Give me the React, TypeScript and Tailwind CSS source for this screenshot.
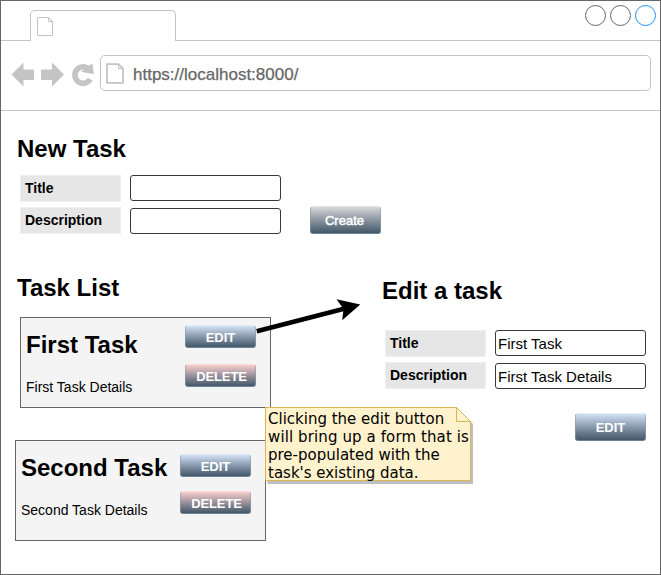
import type { ReactNode } from "react";

function Fields({ title = "", description = "" }: { title?: string; description?: string }) {
  return (
    <div className="flex gap-[9px]">
      <div className="flex flex-col gap-[5px]">
        {["Title", "Description"].map((label) => (
          <label
            key={label}
            className="flex h-[27px] w-[101px] items-center border border-[#f0f0f0] bg-[#e6e6e6] pb-[2px] pl-1 text-sm font-bold"
          >
            {label}
          </label>
        ))}
      </div>
      <div className="flex flex-col gap-[7px]">
        {[title, description].map((value, i) => (
          <div
            key={i}
            className="flex h-[26px] w-[151px] items-center rounded-[3px] border border-[#36393d] bg-white pt-[3px] pl-[2px] text-[15px] whitespace-nowrap"
          >
            {value}
          </div>
        ))}
      </div>
    </div>
  );
}

const tones = {
  gray: "from-[#d8d8d8] border-t-[#e4e4e4]",
  blue: "from-[#d4e1f5] border-t-[#dfe9f8]",
  red: "from-[#f8cecc] border-t-[#fadbd9]",
};

function Button({ tone, size, children }: { tone: keyof typeof tones; size: string; children: ReactNode }) {
  return (
    <button
      className={`flex w-[71px] items-center justify-center rounded-[3px] border border-x-[#8d9caa]/60 border-b-[#6b8496] bg-linear-to-b to-[#43586a] pt-px text-[13px] leading-none font-bold text-white ${tones[tone]} ${size}`}
    >
      {children}
    </button>
  );
}

function TaskCard({ name, box, buttons }: { name: string; box: string; buttons: string }) {
  return (
    <article className={`flex w-[251px] justify-between border border-[#666] bg-[#f4f4f4] pr-[14px] pl-[5px] ${box}`}>
      <div className="flex flex-col gap-[18px] pt-[13px]">
        <h3 className="text-2xl leading-[28px] font-bold whitespace-nowrap">{name}</h3>
        <p className="text-sm leading-5 whitespace-nowrap">{name} Details</p>
      </div>
      <div className={`flex flex-col ${buttons}`}>
        <Button tone="blue" size="h-[23px]">EDIT</Button>
        <Button tone="red" size="h-[23px]">
          <span className="pl-[2px] tracking-[-0.1px]">DELETE</span>
        </Button>
      </div>
    </article>
  );
}

export default function App() {
  return (
    <div className="relative flex h-[575px] w-[661px] flex-col overflow-hidden border border-[#666] bg-white font-['Liberation_Sans',Arial,sans-serif] text-black">
      <header className="-mx-px flex h-10 shrink-0 items-end">
        <div className="h-px w-[30px] bg-[#c4c4c4]" />
        <div className="h-[31px] w-[146px] rounded-t-[5px] border border-b-0 border-[#c4c4c4] pt-[6px] pl-[6px]">
          <svg className="h-5 w-[17px]" viewBox="0 0 17 20" fill="none" stroke="#c4c4c4">
            <path d="M.5 .5H11.5L15.5 4.5V18.5H.5Z" />
            <path d="M11.5 .5V4.5H15.5" />
          </svg>
        </div>
        <div className="flex h-10 flex-1 justify-end gap-1 border-b border-[#c4c4c4] pt-1 pr-[5px]">
          <span className="size-[21px] rounded-full border border-[#666]" />
          <span className="size-[21px] rounded-full border border-[#666]" />
          <span className="size-[21px] rounded-full border border-[#1e90ff]" />
        </div>
      </header>

      <nav className="-mx-px flex h-[70px] shrink-0 border-b border-[#c4c4c4] pt-[14px] pl-[10px]">
        <svg className="mt-[5px] h-[28px] w-[90px]" viewBox="10 60 90 28" fill="#c4c4c4">
          <path d="M11.5 74.5L23.5 62.5V69.5H34V80H23.5V86.5Z" />
          <path d="M64 74.5L52 62.5V69.5H41V80H52V86.5Z" />
          <path d="M90.2 79.2A8.2 8.2 0 1 1 88 68.5" fill="none" stroke="#c4c4c4" strokeWidth="5.6" />
          <path d="M92.3 63.3L93.8 74.3L81 71.7Z" />
        </svg>
        <div className="flex h-9 w-[551px] items-center rounded-[5px] border border-[#c4c4c4] pl-[5px] text-[17px] text-[#666]">
          <svg className="mr-[9px] h-[21px] w-[18px]" viewBox="0 0 18 21" fill="none" stroke="#c4c4c4">
            <path d="M1 1.2H12.5L17 5.7V19.8H1Z" strokeWidth="1.8" />
            <path d="M12.5 1.5V5.5H17" />
          </svg>
          <span className="pt-[3px] [-webkit-text-stroke:0.25px_#666]">https://localhost:8000/</span>
        </div>
      </nav>

      <main className="flex flex-1">
        <div className="w-[381px] pt-6">
          <section>
            <h2 className="pl-4 text-2xl leading-[28px] font-bold">New Task</h2>
            <form className="mt-3 flex items-end gap-[29px] pl-[19px]">
              <Fields />
              <Button tone="gray" size="h-[28px]">
                <span className="pr-[2px] font-normal [-webkit-text-stroke:0.5px_white]">Create</span>
              </Button>
            </form>
          </section>
          <section className="mt-10">
            <h2 className="pl-4 text-2xl leading-[28px] font-bold">Task List</h2>
            <div className="mt-[15px] pl-[19px]">
              <TaskCard name="First Task" box="h-[91px]" buttons="gap-4 pt-[7px]" />
            </div>
            <div className="mt-8 pl-[14px]">
              <TaskCard name="Second Task" box="h-[101px]" buttons="gap-[14px] pt-[13px]" />
            </div>
          </section>
        </div>

        <section className="pt-[166px]">
          <h2 className="text-2xl leading-[28px] font-bold">Edit a task</h2>
          <form className="mt-[25px] flex flex-col items-end pl-[3px]">
            <Fields title="First Task" description="First Task Details" />
            <div className="mt-6">
              <Button tone="blue" size="h-[28px]">EDIT</Button>
            </div>
          </form>
        </section>
      </main>

      {/* connector from the first card's EDIT button to the edit form */}
      <svg className="absolute top-[289px] left-[249px] h-[50px] w-[120px]" viewBox="250 290 120 50">
        <path d="M256.8 331.3L345 308.5" stroke="#000" strokeWidth="4.8" />
        <path d="M360.3 304.5L342.2 320.2L343.5 309L336.5 299.3Z" />
      </svg>

      <aside className="absolute top-[406px] left-[264px] h-[78px] w-[210px]">
        <svg className="absolute inset-0" width="210" height="78" viewBox="265 407 210 78">
          <path d="M267.5 410H459L473 424V484H267.5Z" fill="#bfbfbf" />
          <path d="M265.5 407.5H456.5L470.5 421.5V480.5H265.5Z" fill="#fff2cc" stroke="#d6b656" />
          <path d="M456.5 407.5V421.5H470.5" fill="none" stroke="#d6b656" />
        </svg>
        <p className="relative pt-[3px] pl-[3px] font-['DejaVu_Sans',Verdana,sans-serif] text-[15px] leading-[18px] whitespace-nowrap">
          Clicking the edit button
          <br />
          <span className="tracking-[0.11px]">will bring up a form that is</span>
          <br />
          pre-populated with the
          <br />
          task's existing data.
        </p>
      </aside>
    </div>
  );
}
